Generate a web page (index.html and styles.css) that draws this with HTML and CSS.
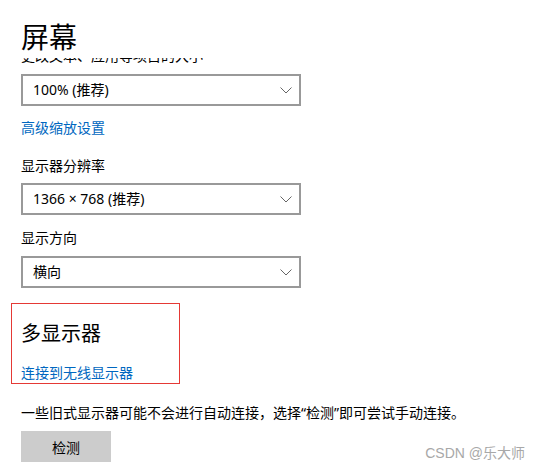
FILE: index.html
```html
<!DOCTYPE html>
<html lang="zh-CN">
<head>
<meta charset="utf-8">
<title>屏幕</title>
<link rel="stylesheet" href="styles.css">
</head>
<body>
<main class="page">
  <h1 class="title">屏幕</h1>
  <div class="clip"><span class="clip-text">更改文本、应用等项目的大小</span></div>
  <div class="select select-first"><span>100% (推荐)</span><svg class="chev" width="12" height="7" viewBox="0 0 12 7"><path d="M0.5 0.5 L6 6 L11.5 0.5" fill="none" stroke="#666" stroke-width="1"/></svg></div>
  <a class="link link-scale">高级缩放设置</a>
  <div class="label">显示器分辨率</div>
  <div class="select"><span>1366 × 768 (推荐)</span><svg class="chev" width="12" height="7" viewBox="0 0 12 7"><path d="M0.5 0.5 L6 6 L11.5 0.5" fill="none" stroke="#666" stroke-width="1"/></svg></div>
  <div class="label">显示方向</div>
  <div class="select"><span>横向</span><svg class="chev" width="12" height="7" viewBox="0 0 12 7"><path d="M0.5 0.5 L6 6 L11.5 0.5" fill="none" stroke="#666" stroke-width="1"/></svg></div>
  <section class="multi">
    <h2 class="subtitle">多显示器</h2>
    <a class="link link-wireless">连接到无线显示器</a>
  </section>
  <p class="note">一些旧式显示器可能不会进行自动连接，选择“检测”即可尝试手动连接。</p>
  <button class="btn">检测</button>
</main>
<div class="watermark">CSDN @乐大师</div>
</body>
</html>
```
FILE: styles.css
```css
html, body {
  margin: 0;
  padding: 0;
  background: #fff;
}
body {
  width: 540px;
  height: 469px;
  overflow: hidden;
  position: relative;
  font-family: "Noto Sans", "Noto Sans CJK SC", sans-serif;
  font-size: 14px;
  line-height: 20px;
  color: #000;
}
.page {
  padding: 0 0 0 21px;
  display: flex;
  flex-direction: column;
  align-items: flex-start;
}
.title {
  margin: 19px 0 0 0;
  font-size: 28px;
  line-height: 36px;
  font-weight: 400;
}
.clip {
  height: 6px;
  overflow: hidden;
  margin-top: 3px;
}
.clip-text {
  display: block;
  margin-top: -12px;
  white-space: nowrap;
}
.select {
  box-sizing: border-box;
  width: 280px;
  height: 32px;
  border: 2px solid #999;
  display: flex;
  align-items: center;
  justify-content: space-between;
  padding: 0 7px 0 10px;
}
.select-first {
  margin-top: 10px;
}
.chev {
  display: block;
}
.link {
  color: #0067c0;
  cursor: pointer;
}
.link-scale {
  margin-top: 12px;
}
.label {
  margin-top: 18px;
  margin-bottom: 7px;
}
.select + .label {
  margin-top: 13px;
  margin-bottom: 8px;
}
.multi {
  box-sizing: border-box;
  width: 169px;
  height: 81px;
  margin: 15px 0 0 -10px;
  padding: 0 0 0 9px;
  border: 1px solid #e53935;
  display: flex;
  flex-direction: column;
}
.subtitle {
  margin: 16px 0 0 0;
  font-size: 20px;
  line-height: 28px;
  font-weight: 400;
}
.link-wireless {
  margin-top: 15px;
}
.note {
  margin: 19px 0 0 0;
}
.btn {
  margin-top: 8px;
  width: 90px;
  height: 31px;
  border: none;
  background: #ccc;
  font-family: inherit;
  font-size: 14px;
  color: #000;
  padding: 0;
}
.watermark {
  position: absolute;
  right: 15px;
  top: 444px;
  font-size: 14px;
  line-height: 18px;
  color: #a8a8a8;
  font-family: "Liberation Sans", "Noto Sans CJK SC", sans-serif;
}
```
